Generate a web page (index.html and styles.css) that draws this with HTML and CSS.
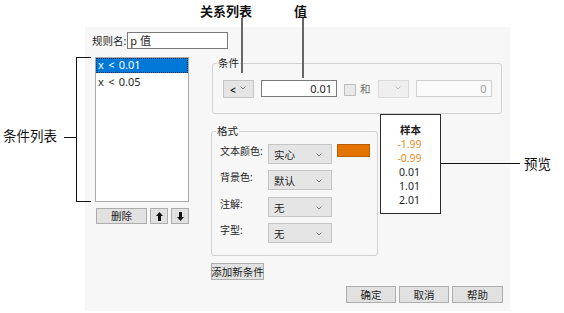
FILE: index.html
```html
<!DOCTYPE html>
<html lang="zh">
<head>
<meta charset="utf-8">
<title>条件格式</title>
<link rel="stylesheet" href="styles.css">
</head>
<body>
<div class="stage">
  <div class="panel">
    <div class="name-row">
      <span class="lbl">规则名:</span>
      <div class="textbox name-box">p 值</div>
    </div>
    <div class="body">
      <div class="left-col">
        <div class="listbox">
          <div class="list-item selected">x &lt; 0.01</div>
          <div class="list-item">x &lt; 0.05</div>
        </div>
        <div class="list-btns">
          <div class="btn del-btn">删除</div>
          <div class="btn icon-btn"><svg width="7" height="9" viewBox="0 0 7 9"><polygon points="3.5,0 7,4 5,4 5,9 2,9 2,4 0,4" fill="#111"/></svg></div>
          <div class="btn icon-btn"><svg width="7" height="9" viewBox="0 0 7 9"><polygon points="3.5,9 7,5 5,5 5,0 2,0 2,5 0,5" fill="#111"/></svg></div>
        </div>
      </div>
      <div class="right-col">
        <div class="group cond-group">
          <span class="legend">条件</span>
          <div class="cond-row">
            <div class="dd small-dd"><span class="dd-text op">&lt;</span><svg class="chev" width="6" height="4" viewBox="0 0 6 4"><polyline points="0.5,0.5 3,3 5.5,0.5" fill="none" stroke="#777" stroke-width="1"/></svg></div>
            <div class="textbox value-box">0.01</div>
            <div class="checkbox"></div>
            <span class="and-lbl">和</span>
            <div class="dd small-dd disabled"><svg class="chev" width="6" height="4" viewBox="0 0 6 4"><polyline points="0.5,0.5 3,3 5.5,0.5" fill="none" stroke="#bbb" stroke-width="1"/></svg></div>
            <div class="textbox value-box disabled-box">0</div>
          </div>
        </div>
        <div class="format-row">
          <div class="group fmt-group">
            <span class="legend">格式</span>
            <div class="fmt-grid">
              <span class="fmt-lbl">文本颜色:</span>
              <div class="dd fmt-dd"><span class="dd-text">实心</span><svg class="chev" width="6" height="4" viewBox="0 0 6 4"><polyline points="0.5,0.5 3,3 5.5,0.5" fill="none" stroke="#777" stroke-width="1"/></svg></div>
              <div class="swatch"></div>
              <span class="fmt-lbl">背景色:</span>
              <div class="dd fmt-dd"><span class="dd-text">默认</span><svg class="chev" width="6" height="4" viewBox="0 0 6 4"><polyline points="0.5,0.5 3,3 5.5,0.5" fill="none" stroke="#777" stroke-width="1"/></svg></div>
              <span></span>
              <span class="fmt-lbl">注解:</span>
              <div class="dd fmt-dd"><span class="dd-text">无</span><svg class="chev" width="6" height="4" viewBox="0 0 6 4"><polyline points="0.5,0.5 3,3 5.5,0.5" fill="none" stroke="#777" stroke-width="1"/></svg></div>
              <span></span>
              <span class="fmt-lbl">字型:</span>
              <div class="dd fmt-dd"><span class="dd-text">无</span><svg class="chev" width="6" height="4" viewBox="0 0 6 4"><polyline points="0.5,0.5 3,3 5.5,0.5" fill="none" stroke="#777" stroke-width="1"/></svg></div>
              <span></span>
            </div>
          </div>
          <div class="preview">
            <div class="pv-head">样本</div>
            <div class="pv-val orange">-1.99</div>
            <div class="pv-val orange">-0.99</div>
            <div class="pv-val">0.01</div>
            <div class="pv-val">1.01</div>
            <div class="pv-val">2.01</div>
          </div>
        </div>
        <div class="btn add-btn">添加新条件</div>
      </div>
    </div>
    <div class="footer">
      <div class="btn foot-btn">确定</div>
      <div class="btn foot-btn">取消</div>
      <div class="btn foot-btn wide">帮助</div>
    </div>
  </div>

  <span class="callout c-rel">关系列表</span>
  <div class="vline l-rel"></div>
  <span class="callout c-val">值</span>
  <div class="vline l-val"></div>

  <span class="callout c-list">条件列表</span>
  <div class="hline l-list"></div>
  <div class="bracket"></div>

  <div class="hline l-prev"></div>
  <span class="callout c-prev">预览</span>
</div>
</body>
</html>
```

FILE: styles.css
```css
* { box-sizing: border-box; }
html, body { margin: 0; padding: 0; background: #fff; }
body {
  font-family: "Noto Sans", "Noto Sans CJK SC", sans-serif;
  font-size: 10.5px;
  color: #1e1e1e;
}
.stage {
  position: relative;
  width: 564px;
  height: 313px;
  padding-top: 27px;
  overflow: hidden;
}
.panel {
  margin-left: 85px;
  width: 425px;
  height: 284px;
  background: #f7f7f7;
  padding: 5px 0 0 7px;
  display: flex;
  flex-direction: column;
}
.name-row {
  display: flex;
  align-items: center;
  height: 17px;
}
.lbl { line-height: 14px; }
.textbox {
  background: #fff;
  border: 1px solid #7a7a7a;
  height: 17px;
  line-height: 15px;
  padding: 0 2px;
}
.name-box { width: 101px; margin-left: 1px; font-size: 11px; }

.body {
  display: flex;
  margin-top: 8px;
}
.left-col {
  margin-left: 3px;
  width: 94px;
  display: flex;
  flex-direction: column;
}
.listbox {
  height: 145px;
  background: #fff;
  border: 1px solid #ababab;
  font-size: 11px;
  word-spacing: 1.5px;
}
.list-item {
  height: 15px;
  line-height: 14px;
  padding-left: 2px;
  margin: 0 0 1px 0;
}
.list-item.selected {
  background: #0078d7;
  color: #fff;
  border: 1px dotted #1a2f4a;
  line-height: 12px;
  padding-left: 1px;
  margin-bottom: 2px;
}
.list-btns {
  display: flex;
  margin-top: 6px;
  gap: 3px;
  padding-left: 1px;
}
.btn {
  background: #e1e1e1;
  border: 1px solid #adadad;
  display: flex;
  align-items: center;
  justify-content: center;
  height: 16px;
  line-height: 14px;
}
.del-btn { width: 51px; }
.icon-btn { width: 18px; }

.right-col {
  margin-left: 22px;
  margin-top: 6px;
  display: flex;
  flex-direction: column;
}
.group {
  position: relative;
  border: 1px solid #d2d2d2;
  border-radius: 3px;
}
.legend {
  position: absolute;
  top: -8px;
  left: 4px;
  background: #f7f7f7;
  padding: 0 1px;
  line-height: 14px;
}
.cond-group {
  margin-left: 1px;
  width: 290px;
  height: 51px;
  padding: 16px 0 0 10px;
}
.cond-row {
  display: flex;
  align-items: flex-start;
}
.dd {
  position: relative;
  background: #e5e5e5;
  border: 1px solid #c5c5c5;
  height: 18px;
  display: flex;
  align-items: center;
}
.dd .chev { position: absolute; right: 8px; top: 7px; }
.dd-text { padding-left: 5px; line-height: 14px; padding-top: 2px; }
.dd-text.op { font-weight: bold; font-size: 10px; padding-left: 6px; padding-top: 1px; }
.small-dd { width: 31px; }
.small-dd .chev { right: 7px; top: 5px; }
.dd.disabled { background: #efefef; border-color: #dadada; }
.value-box {
  width: 76px;
  margin-left: 7px;
  text-align: right;
  font-size: 11px;
  padding-right: 4px;
}
.disabled-box { border-color: #cfcfcf; color: #9a9a9a; background: #fafafa; }
.checkbox {
  width: 12px;
  height: 12px;
  margin: 4px 0 0 7px;
  background: #e9e9e9;
  border: 1px solid #bdbdbd;
}
.and-lbl {
  margin-left: 4px;
  margin-right: 7px;
  color: #6e6e6e;
  line-height: 14px;
  margin-top: 2px;
}

.format-row {
  display: flex;
  align-items: flex-start;
}
.fmt-group {
  margin-top: 17px;
  width: 167px;
  height: 125px;
  padding: 12px 0 0 8px;
}
.fmt-grid {
  display: grid;
  grid-template-columns: 43px 64px 33px;
  column-gap: 5px;
  row-gap: 6.4px;
  align-items: start;
}
.fmt-lbl { line-height: 14px; white-space: nowrap; font-size: 10px; }
.fmt-dd { height: 20px; }
.fmt-dd .chev { top: 8px; right: 9px; }
.swatch {
  width: 33px;
  height: 13px;
  background: #e37400;
  border: 1px solid #b85d00;
}
.preview {
  margin-left: 2px;
  width: 61px;
  height: 100px;
  background: #fff;
  border: 1px solid #2a2a2a;
  padding-top: 8px;
  text-align: center;
  font-size: 10.5px;
}
.pv-head { font-weight: bold; line-height: 14px; }
.pv-val { line-height: 14px; padding-right: 2px; }
.orange { color: #f08a24; }

.add-btn {
  margin-top: 7px;
  width: 53px;
  height: 17px;
  white-space: nowrap;
}
.footer {
  display: flex;
  justify-content: flex-end;
  gap: 3px;
  margin-top: 6px;
  padding-right: 7px;
}
.foot-btn { width: 50px; height: 17px; }
.foot-btn.wide { width: 51px; }

.callout {
  position: absolute;
  line-height: 16px;
  color: #111;
  white-space: nowrap;
}
.c-rel { left: 200px; top: 3px; font-size: 13px; font-weight: bold; }
.c-val { left: 294px; top: 3px; font-size: 13px; font-weight: bold; }
.c-list { left: 3px; top: 128px; font-size: 13.5px; }
.c-prev { left: 524px; top: 156px; font-size: 13.5px; }
.vline {
  position: absolute;
  width: 2px;
  background: #666;
}
.l-rel { left: 241px; top: 18px; height: 55px; }
.l-val { left: 302px; top: 18px; height: 60px; }
.hline {
  position: absolute;
  height: 1px;
  background: #111;
}
.l-list { left: 64px; top: 137px; width: 12px; }
.l-prev { left: 441px; top: 163px; width: 79px; }
.bracket {
  position: absolute;
  left: 76px;
  top: 57px;
  width: 15px;
  height: 145px;
  border: 1px solid #111;
  border-right: none;
}
```
